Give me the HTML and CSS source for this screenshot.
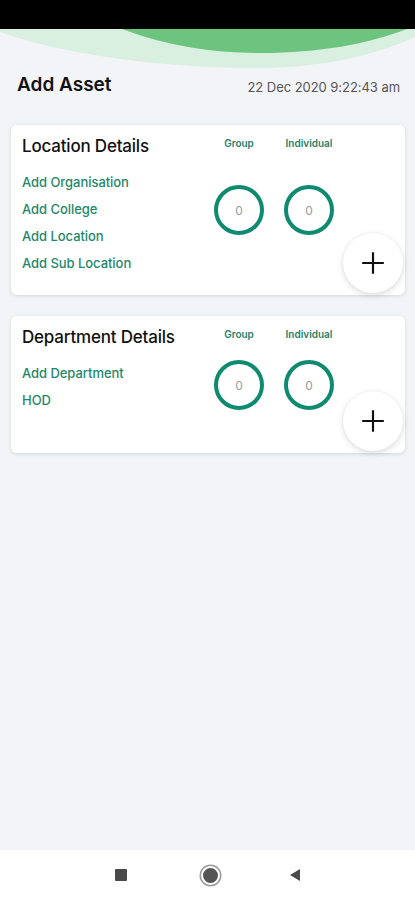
FILE: index.html
```html
<!DOCTYPE html>
<html lang="en">
<head>
<meta charset="utf-8">
<title>Add Asset</title>
<link rel="stylesheet" href="styles.css">
</head>
<body>
<div class="screen">
  <div class="status-bar"></div>
  <main class="main">
    <svg class="wave" viewBox="0 0 415 40" preserveAspectRatio="none" aria-hidden="true">
      <path d="M0,0 L0,3 C70,28 180,40 262,39 C330,38 380,24 415,8 L415,0 Z" fill="#d9efe0"/>
      <path d="M122,0 C170,18 215,24 262,24 C318,24 368,15 407,0 Z" fill="#6cc47e"/>
    </svg>
    <div class="title-row">
      <h1 class="page-title">Add Asset</h1>
      <span class="date">22 Dec 2020 9:22:43 am</span>
    </div>

    <section class="card">
      <div class="card-left">
        <h2 class="card-title">Location Details</h2>
        <ul class="links">
          <li>Add Organisation</li>
          <li>Add College</li>
          <li>Add Location</li>
          <li>Add Sub Location</li>
        </ul>
      </div>
      <div class="stat stat--loc">
        <span class="stat-label">Group</span>
        <span class="ring">0</span>
      </div>
      <div class="stat stat--loc">
        <span class="stat-label">Individual</span>
        <span class="ring">0</span>
      </div>
      <div class="fab-col">
        <button class="fab" aria-label="Add">
          <svg viewBox="0 0 24 24" width="26" height="26"><path d="M12 2v20M2 12h20" stroke="#111" stroke-width="2" fill="none"/></svg>
        </button>
      </div>
    </section>

    <section class="card card--dept">
      <div class="card-left">
        <h2 class="card-title">Department Details</h2>
        <ul class="links">
          <li>Add Department</li>
          <li>HOD</li>
        </ul>
      </div>
      <div class="stat stat--dept">
        <span class="stat-label">Group</span>
        <span class="ring">0</span>
      </div>
      <div class="stat stat--dept">
        <span class="stat-label">Individual</span>
        <span class="ring">0</span>
      </div>
      <div class="fab-col">
        <button class="fab" aria-label="Add">
          <svg viewBox="0 0 24 24" width="26" height="26"><path d="M12 2v20M2 12h20" stroke="#111" stroke-width="2" fill="none"/></svg>
        </button>
      </div>
    </section>
  </main>
  <nav class="nav-bar">
    <span class="nav-square"></span>
    <span class="nav-home"></span>
    <svg class="nav-back" viewBox="0 0 12 14" width="12" height="14"><path d="M11 1 L1 7 L11 13 Z" fill="#4a4a4a"/></svg>
  </nav>
</div>
</body>
</html>
```

FILE: styles.css
```css
* { box-sizing: border-box; }
html, body { margin: 0; padding: 0; }
body {
  font-family: Inter, "Open Sans", Arial, sans-serif;
  background: #f3f4f8;
  color: #111;
}
.screen {
  width: 415px;
  height: 900px;
  display: flex;
  flex-direction: column;
}
.status-bar {
  height: 29px;
  background: #000;
  flex: none;
}
.main {
  flex: 1;
  background: #f3f4f8;
  display: flex;
  flex-direction: column;
}
.wave {
  display: block;
  width: 415px;
  height: 40px;
  flex: none;
}
.title-row {
  height: 30px;
  display: flex;
  align-items: center;
  justify-content: space-between;
  padding: 0 15px 0 17px;
}
.page-title {
  margin: 0;
  font-size: 19px;
  font-weight: 600;
  color: #111;
}
.date {
  font-size: 13px;
  color: #555;
  padding-top: 5px;
  letter-spacing: -0.05px;
}
.card {
  margin: 26px 10px 0 11px;
  background: #fff;
  border-radius: 6px;
  box-shadow: 0 1px 4px rgba(0,0,0,0.12);
  display: flex;
  padding: 0 2px 2px 11px;
}
.card--dept {
  margin-top: 21px;
  min-height: 137px;
}
.card-left {
  flex: 1;
  padding: 10px 0 16px;
}
.card-title {
  margin: 0;
  font-size: 17px;
  line-height: 22px;
  font-weight: 500;
  color: #111;
  letter-spacing: -0.2px;
}
.links {
  list-style: none;
  margin: 12px 0 0;
  padding: 0;
}
.links li {
  font-size: 13px;
  line-height: 27px;
  font-weight: 500;
  color: #1f876a;
  letter-spacing: -0.05px;
}
.stat {
  width: 50px;
  display: flex;
  flex-direction: column;
  align-items: center;
  padding-top: 11px;
}
.stat + .stat { margin-left: 20px; }
.stat-label {
  font-size: 10px;
  line-height: 14px;
  font-weight: 600;
  color: #1f7f6a;
  white-space: nowrap;
}
.ring {
  width: 50px;
  height: 50px;
  border-radius: 50%;
  border: 4px solid #0d8a6f;
  display: flex;
  align-items: center;
  justify-content: center;
  font-size: 12px;
  color: #9a9a9a;
}
.stat--loc .ring { margin-top: 35px; }
.stat--dept .ring { margin-top: 19px; }
.fab-col {
  margin-left: 9px;
  display: flex;
  align-items: flex-end;
}
.fab {
  width: 60px;
  height: 60px;
  border-radius: 50%;
  border: none;
  background: #fff;
  box-shadow: 0 2px 6px rgba(0,0,0,0.14), 0 0 2px rgba(0,0,0,0.06);
  display: flex;
  align-items: center;
  justify-content: center;
  padding: 0;
}
.nav-bar {
  height: 50px;
  flex: none;
  background: #fff;
  display: flex;
  align-items: center;
  justify-content: center;
}
.nav-square {
  width: 12px;
  height: 12px;
  background: #4a4a4a;
  border-radius: 1px;
}
.nav-home {
  width: 19px;
  height: 19px;
  border-radius: 50%;
  background: #555;
  border: 2px solid #fff;
  box-shadow: 0 0 0 1.5px #9a9a9a;
  margin: 0 69px 0 74px;
}
.nav-back { display: block; }
```
